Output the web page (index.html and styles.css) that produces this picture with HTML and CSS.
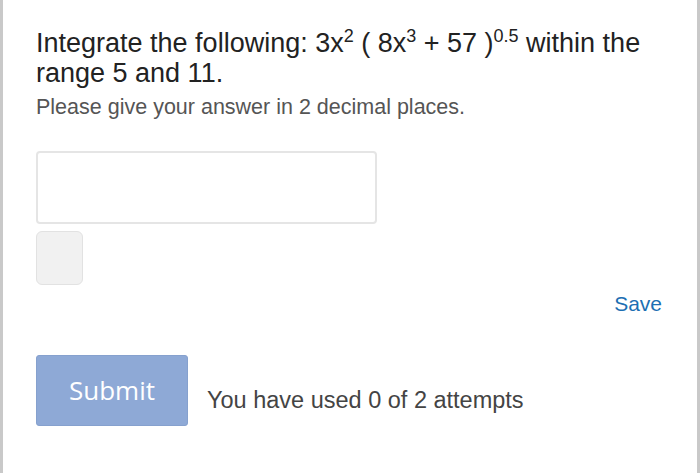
FILE: index.html
```html
<!DOCTYPE html>
<html>
<head>
<meta charset="utf-8">
<link rel="stylesheet" href="styles.css">
</head>
<body>
<div class="frame">
  <div class="question">Integrate the following: 3x<sup>2</sup> ( 8x<sup>3</sup> + 57 )<sup>0.5</sup> within the range 5 and 11.</div>
  <div class="hint">Please give your answer in 2 decimal places.</div>
  <div class="answer"></div>
  <div class="unit"></div>
  <div class="save-row"><span class="save">Save</span></div>
  <div class="submit-row">
    <div class="submit">Submit</div>
    <div class="attempts">You have used 0 of 2 attempts</div>
  </div>
</div>
</body>
</html>
```

FILE: styles.css
```css
html, body {
  margin: 0;
  padding: 0;
  background: #ffffff;
}
.frame {
  box-sizing: border-box;
  width: 700px;
  height: 473px;
  border-left: 3px solid #c9c9c9;
  border-right: 3px solid #c9c9c9;
  padding: 28px 35px 0 33px;
  font-family: "Liberation Sans", Arial, sans-serif;
  color: #222;
}
.question {
  font-size: 27px;
  line-height: 30px;
  color: #222;
  width: 625px;
}
.question sup {
  font-size: 18px;
  line-height: 0;
  vertical-align: 10px;
}
.hint {
  margin-top: 6px;
  font-size: 21.5px;
  line-height: 26px;
  color: #555;
}
.answer {
  margin-top: 31px;
  box-sizing: border-box;
  width: 341px;
  height: 73px;
  border: 2px solid #e5e5e5;
  border-radius: 4px;
  background: #fff;
}
.unit {
  margin-top: 7px;
  box-sizing: border-box;
  width: 47px;
  height: 54px;
  border: 1px solid #e2e2e2;
  border-radius: 6px;
  background: #f1f1f1;
}
.save-row {
  display: flex;
  justify-content: flex-end;
  margin-top: 4px;
}
.save {
  font-size: 21px;
  line-height: 30px;
  color: #1d6fb3;
}
.submit-row {
  display: flex;
  align-items: flex-end;
  margin-top: 36px;
}
.submit {
  box-sizing: border-box;
  width: 152px;
  height: 71px;
  background: #8ea9d6;
  border: 1px solid #86a1ce;
  border-radius: 3px;
  color: #fff;
  font-family: "Open Sans", sans-serif;
  font-size: 26px;
  line-height: 69px;
  text-align: center;
}
.attempts {
  margin-left: 19px;
  padding-bottom: 11px;
  font-size: 23.5px;
  line-height: 30px;
  color: #444;
}
```
